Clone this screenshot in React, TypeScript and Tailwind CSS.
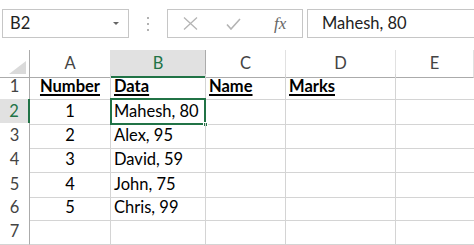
import React from "react";

const FONT = { fontFamily: '"Lato", "Liberation Sans", sans-serif' };

type Row = { n: number; a: string; b: string; c: string; d: string; bold?: boolean };

const rows: Row[] = [
  { n: 1, a: "Number", b: "Data", c: "Name", d: "Marks", bold: true },
  { n: 2, a: "1", b: "Mahesh, 80", c: "", d: "" },
  { n: 3, a: "2", b: "Alex, 95", c: "", d: "" },
  { n: 4, a: "3", b: "David, 59", c: "", d: "" },
  { n: 5, a: "4", b: "John, 75", c: "", d: "" },
  { n: 6, a: "5", b: "Chris, 99", c: "", d: "" },
  { n: 7, a: "", b: "", c: "", d: "" },
];

const rowH = ["h-[25px]", "h-[24px]", "h-[24px]", "h-[25px]", "h-[23px]", "h-[24px]", "h-[25px]"];

const GRID = "grid grid-cols-[30px_81px_95px_80px_110px_1fr]";

function FormulaBar() {
  return (
    <div className="flex h-[50px] items-start pt-[9px]">
      {/* name box */}
      <div className="ml-[2px] flex h-[29px] w-[127px] items-center justify-between border border-[#c6c6c6] bg-white pl-[7px] pr-[9px]">
        <span className="text-[16.5px] text-[#222]">B2</span>
        <span className="h-0 w-0 border-x-[3px] border-t-[3px] border-x-transparent border-t-[#666]" />
      </div>

      {/* grip dots */}
      <div className="flex h-[29px] w-[38px] flex-col items-center justify-center gap-[4px]">
        <span className="h-[2px] w-[2px] rounded-full bg-[#999]" />
        <span className="h-[2px] w-[2px] rounded-full bg-[#999]" />
        <span className="h-[2px] w-[2px] rounded-full bg-[#999]" />
      </div>

      {/* cancel / enter / fx */}
      <div className="flex h-[29px] w-[136px] items-center border border-[#c6c6c6] bg-white">
        <svg className="ml-[15px]" width="15" height="13" viewBox="0 0 15 13">
          <path d="M1 0.5 L14 12.5 M14 0.5 L1 12.5" stroke="#b4b4b4" strokeWidth="1.3" fill="none" />
        </svg>
        <svg className="ml-[28px]" width="15" height="12" viewBox="0 0 15 12">
          <path d="M1 6.5 L5 11 L14 1" stroke="#b4b4b4" strokeWidth="1.6" fill="none" />
        </svg>
        <span
          className="ml-[33px] text-[17px] italic text-[#666]"
          style={{ fontFamily: '"Liberation Serif", serif' }}
        >
          fx
        </span>
      </div>

      {/* formula input */}
      <div className="ml-[4px] flex h-[29px] flex-1 items-center border-y border-l border-[#c6c6c6] bg-white pl-[14px]">
        <span className="text-[16.5px] text-[#222]">Mahesh, 80</span>
      </div>
    </div>
  );
}

function ColumnHeader() {
  const cols = ["A", "B", "C", "D", "E"];
  return (
    <div className={`${GRID} h-[24px]`}>
      <div className="relative border-r border-b border-[#ababab] bg-white">
        <span className="absolute bottom-[3px] right-[3px] h-0 w-0 border-b-[13px] border-l-[17px] border-b-[#dadada] border-l-transparent" />
      </div>
      {cols.map((c) =>
        c === "B" ? (
          <div
            key={c}
            className="flex items-center justify-center border-r border-b-2 border-r-[#ababab] border-b-[#217346] bg-[#e1e1e1] pt-[1px] text-[16.5px] text-[#217346]"
          >
            {c}
          </div>
        ) : (
          <div
            key={c}
            className="flex items-center justify-center border-r border-b border-r-[#e1e1e1] border-b-[#ababab] bg-white text-[16.5px] text-[#444]"
          >
            {c}
          </div>
        )
      )}
    </div>
  );
}

function DataRow({ row, h }: { row: Row; h: string }) {
  const selected = row.n === 2;
  const txt = row.bold ? "font-bold underline decoration-[1.5px] underline-offset-[2px]" : "";
  return (
    <div className={`${GRID} ${h}`}>
      <div
        className={[
          "flex items-center justify-center border-b text-[16.5px]",
          selected
            ? "border-r-2 border-r-[#217346] border-b-[#ababab] bg-[#e1e1e1] text-[#217346]"
            : "border-r border-r-[#ababab] border-b-[#d4d4d4] bg-white text-[#444]",
        ].join(" ")}
      >
        {row.n}
      </div>
      <div className={`flex items-center justify-center border-r border-b border-[#d4d4d4] text-[16.5px] text-black ${txt}`}>
        {row.a}
      </div>
      <div className={`relative flex items-center border-r border-b border-[#d4d4d4] pl-[3px] text-[16.5px] text-black ${txt}`}>
        {row.b}
        {selected && (
          <>
            <span className="absolute -left-[1px] -top-[1px] -right-[1px] bottom-[-1px] border-2 border-[#217346]" />
            <span className="absolute -bottom-[3px] -right-[3px] h-[5px] w-[5px] border border-white bg-[#217346]" />
          </>
        )}
      </div>
      <div className={`flex items-center border-r border-b border-[#d4d4d4] pl-[3px] text-[16.5px] text-black ${txt}`}>
        {row.c}
      </div>
      <div className={`flex items-center border-r border-b border-[#d4d4d4] pl-[3px] text-[16.5px] text-black ${txt}`}>
        {row.d}
      </div>
      <div className="border-b border-[#d4d4d4]" />
    </div>
  );
}

export default function App() {
  return (
    <div className="h-[245px] w-[474px] overflow-hidden bg-white" style={FONT}>
      <FormulaBar />
      <ColumnHeader />
      {rows.map((r, i) => (
        <DataRow key={r.n} row={r} h={rowH[i]} />
      ))}
    </div>
  );
}
